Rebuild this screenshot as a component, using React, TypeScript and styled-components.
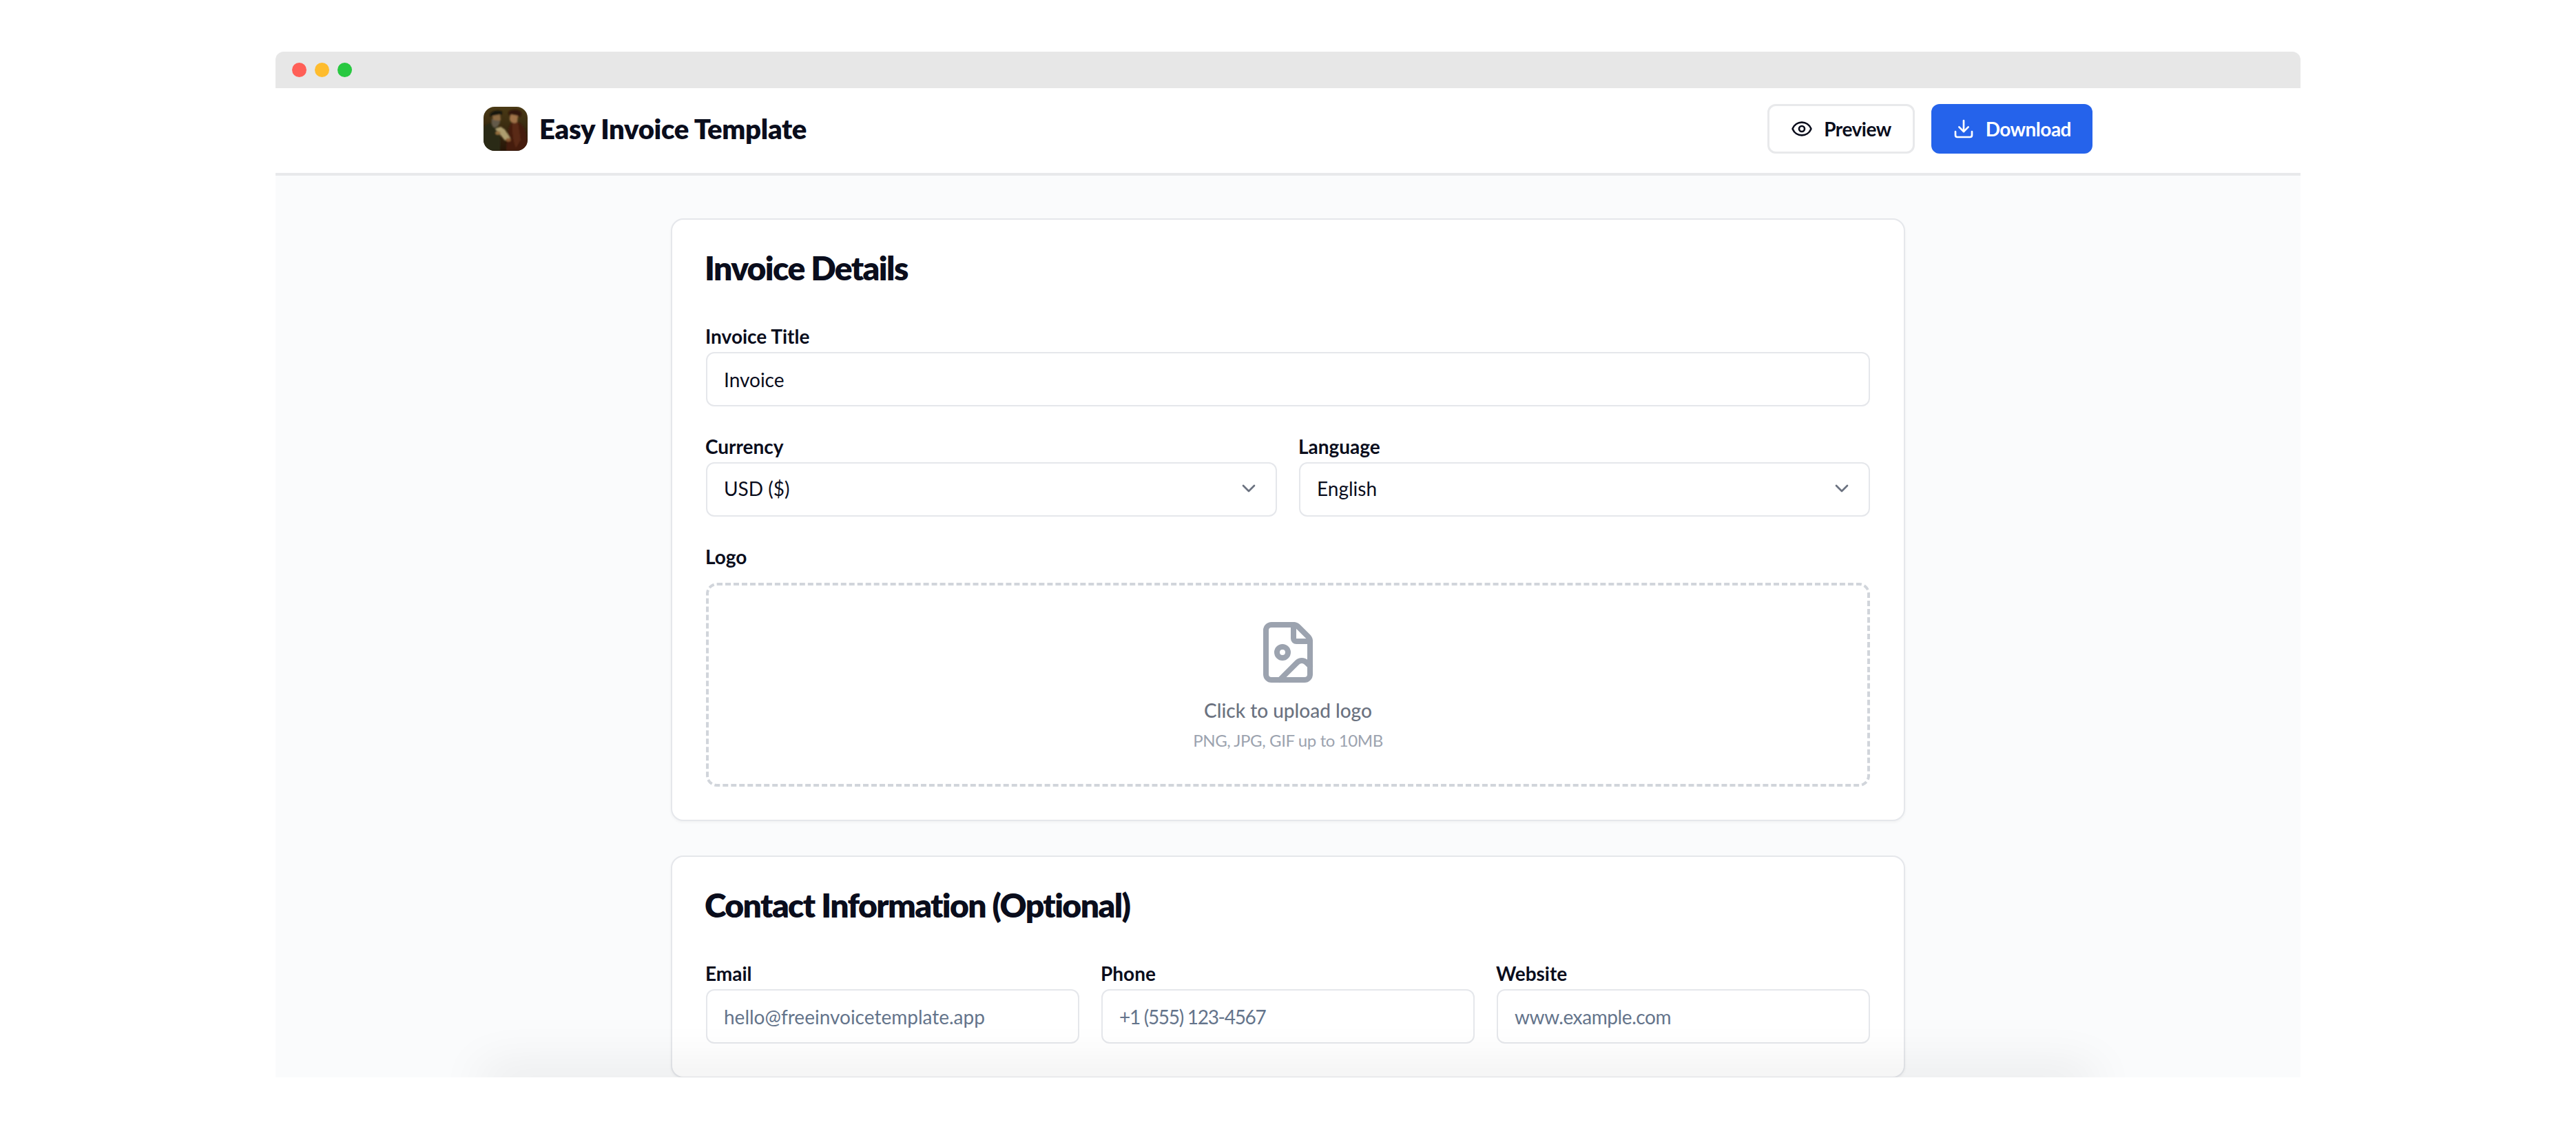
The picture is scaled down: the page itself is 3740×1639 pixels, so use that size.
import React from 'react';
import styled, { createGlobalStyle } from 'styled-components';
import { ChevronDown, Download, Eye, FileImage } from 'lucide-react';

const GlobalStyle = createGlobalStyle`
  html, body {
    margin: 0;
    padding: 0;
    background: #ffffff;
  }
  * {
    box-sizing: border-box;
  }
`;

const Page = styled.div`
  width: 3740px;
  height: 1639px;
  padding-top: 75px;
  display: flex;
  justify-content: center;
  background: #ffffff;
  font-family: 'Lato', 'Noto Sans', sans-serif;
  color: #0a0d1c;
  overflow: hidden;
`;

const Window = styled.div`
  position: relative;
  width: 2940px;
  height: 1489px;
  display: flex;
  flex-direction: column;
  border-radius: 12px 12px 0 0;
  background: #fafbfc;
  overflow: hidden;
`;

const TitleBar = styled.div`
  flex: none;
  height: 53px;
  padding-left: 24px;
  display: flex;
  align-items: center;
  gap: 12px;
  background: #e7e7e7;
`;

const Light = styled.span<{ $color: string }>`
  width: 21px;
  height: 21px;
  border-radius: 50%;
  background: ${(p) => p.$color};
`;

const Header = styled.header`
  flex: none;
  padding: 23px 302px 28px;
  display: flex;
  align-items: center;
  justify-content: space-between;
  background: #ffffff;
  border-bottom: 4px solid #e8e9eb;
`;

const Brand = styled.div`
  display: flex;
  align-items: center;
  gap: 17px;
`;

const BrandName = styled.span`
  font-size: 40px;
  line-height: 56px;
  font-weight: 800;
  letter-spacing: -0.3px;
`;

const Actions = styled.div`
  display: flex;
  gap: 24px;
`;

const Button = styled.button<{ $primary?: boolean }>`
  height: 72px;
  padding: 0 31px;
  display: flex;
  align-items: center;
  gap: 16px;
  border-radius: 12px;
  border: ${(p) => (p.$primary ? 'none' : '3px solid #e8e9eb')};
  background: ${(p) => (p.$primary ? '#2563eb' : '#ffffff')};
  color: ${(p) => (p.$primary ? '#ffffff' : '#0a0d1c')};
  font-family: inherit;
  font-size: 28px;
  font-weight: 700;
  letter-spacing: -0.5px;
`;

const Main = styled.main`
  padding-top: 62px;
  display: flex;
  flex-direction: column;
  align-items: center;
  gap: 50px;
`;

const Card = styled.section`
  width: 1792px;
  padding: 34px 49px 48px;
  background: #ffffff;
  border: 2px solid #e5e7eb;
  border-radius: 18px;
  box-shadow: 0 2px 4px rgba(0, 0, 0, 0.04);
`;

const CardTitle = styled.h2`
  margin: 0 0 47px -2px;
  font-size: 48px;
  line-height: 72px;
  font-weight: 800;
  letter-spacing: -1.6px;
`;

const Row = styled.div<{ $cols?: number }>`
  display: grid;
  grid-template-columns: repeat(${(p) => p.$cols ?? 1}, 1fr);
  gap: 32px;
  margin-bottom: 42px;

  &:last-child {
    margin-bottom: 0;
  }
`;

const Label = styled.label<{ $gap?: number }>`
  display: block;
  margin: 0 0 ${(p) => p.$gap ?? 7}px -1px;
  font-size: 28px;
  line-height: 32px;
  font-weight: 700;
`;

const fieldStyles = `
  width: 100%;
  height: 79px;
  padding: 0 24px;
  background: #ffffff;
  border: 2px solid #e5e7eb;
  border-radius: 12px;
  font-family: inherit;
  font-size: 28px;
  color: #0a0d1c;
  outline: none;
`;

const Input = styled.input<{ $tracking?: number }>`
  ${fieldStyles}
  display: block;
  letter-spacing: ${(p) => p.$tracking ?? 0}px;

  &::placeholder {
    color: #64748b;
    opacity: 1;
  }
`;

const Select = styled.button`
  ${fieldStyles}
  padding-right: 23px;
  padding-bottom: 3px;
  display: flex;
  align-items: center;
  justify-content: space-between;
  text-align: left;

  svg {
    color: #6b7280;
  }
`;

const Upload = styled.div`
  height: 296px;
  padding-top: 49px;
  display: flex;
  flex-direction: column;
  align-items: center;
  border: 4px dashed #d1d5db;
  border-radius: 16px;

  svg {
    color: #9ca3af;
  }
`;

const UploadTitle = styled.div`
  margin-top: 16px;
  font-size: 28px;
  line-height: 40px;
  font-weight: 500;
  color: #6b7280;
`;

const UploadHint = styled.div`
  margin-top: 8px;
  font-size: 24px;
  line-height: 32px;
  letter-spacing: -0.4px;
  color: #9ca3af;
`;

const BottomGlow = styled.div`
  position: absolute;
  top: 100%;
  left: 50%;
  width: 2340px;
  height: 30px;
  transform: translateX(-50%);
  box-shadow: 0 -8px 70px rgba(0, 0, 0, 0.12);
  pointer-events: none;
`;

const BrandArt = () => (
  <svg width="64" height="64" viewBox="0 0 64 64" aria-hidden="true">
    <defs>
      <clipPath id="artClip">
        <rect width="64" height="64" rx="16" />
      </clipPath>
      <linearGradient id="artBg" x1="0" y1="0" x2="0" y2="1">
        <stop offset="0" stopColor="#4a3a15" />
        <stop offset="0.55" stopColor="#36270f" />
        <stop offset="1" stopColor="#261507" />
      </linearGradient>
      <filter id="artSoft" x="-10%" y="-10%" width="120%" height="120%">
        <feGaussianBlur stdDeviation="0.9" />
      </filter>
    </defs>
    <g clipPath="url(#artClip)">
      <rect width="64" height="64" fill="url(#artBg)" />
      <g filter="url(#artSoft)">
        {/* left figure */}
        <path d="M-2 64 L-2 34 C2 24 12 22 19 25 C24 30 25 46 24 64 Z" fill="#2a2b18" />
        <path d="M9 13 C9 7 20 3 27 7 C28 10 26 13 22 13 C18 13 13 15 9 13 Z" fill="#17140c" />
        <path d="M13 13 L24 11 L25 19 L22 23 L14 22 Z" fill="#8c6a42" />
        <path d="M12 17 C14 20 20 20 24 20 C24 26 20 31 15 30 C12 28 11 22 12 17 Z" fill="#635a48" />
        {/* right figure */}
        <path d="M33 64 C34 44 35 28 42 22 C50 20 60 26 62 40 L66 64 Z" fill="#451d0e" />
        <path d="M42 24 L50 22 L54 48 L47 60 C43 50 41 36 42 24 Z" fill="#5a2a14" />
        <path d="M36 8 C40 3 52 3 55 9 C55 13 53 16 50 14 C46 11 41 13 37 13 Z" fill="#331208" />
        <path d="M40 11 L50 13 L49 22 C46 25 42 24 39 21 C37 18 38 14 40 11 Z" fill="#a0724a" />
        {/* scroll and hands */}
        <path d="M17 32 L25 29 L31 33 L39 46 L31 49 L24 40 Z" fill="#ae9e70" />
        <ellipse cx="21" cy="38" rx="3.6" ry="2.6" fill="#95703f" />
        <ellipse cx="36" cy="48" rx="3.6" ry="2.6" fill="#8c5a32" />
      </g>
    </g>
  </svg>
);

const App: React.FC = () => {
  return (
    <Page>
      <GlobalStyle />
      <Window>
        <TitleBar>
          <Light $color="#ff5f57" />
          <Light $color="#febc2e" />
          <Light $color="#28c840" />
        </TitleBar>
        <Header>
          <Brand>
            <BrandArt />
            <BrandName>Easy Invoice Template</BrandName>
          </Brand>
          <Actions>
            <Button>
              <Eye size={32} strokeWidth={2} />
              Preview
            </Button>
            <Button $primary>
              <Download size={32} strokeWidth={2} />
              Download
            </Button>
          </Actions>
        </Header>
        <Main>
          <Card>
            <CardTitle>Invoice Details</CardTitle>
            <Row>
              <div>
                <Label>Invoice Title</Label>
                <Input defaultValue="Invoice" />
              </div>
            </Row>
            <Row $cols={2}>
              <div>
                <Label>Currency</Label>
                <Select type="button">
                  USD ($)
                  <ChevronDown size={32} strokeWidth={2} />
                </Select>
              </div>
              <div>
                <Label>Language</Label>
                <Select type="button">
                  English
                  <ChevronDown size={32} strokeWidth={2} />
                </Select>
              </div>
            </Row>
            <Row>
              <div>
                <Label $gap={22}>Logo</Label>
                <Upload>
                  <FileImage size={96} strokeWidth={2} />
                  <UploadTitle>Click to upload logo</UploadTitle>
                  <UploadHint>PNG, JPG, GIF up to 10MB</UploadHint>
                </Upload>
              </div>
            </Row>
          </Card>
          <Card>
            <CardTitle>Contact Information (Optional)</CardTitle>
            <Row $cols={3}>
              <div>
                <Label>Email</Label>
                <Input placeholder="hello@freeinvoicetemplate.app" />
              </div>
              <div>
                <Label>Phone</Label>
                <Input $tracking={-1.3} placeholder="+1 (555) 123-4567" />
              </div>
              <div>
                <Label>Website</Label>
                <Input $tracking={-0.4} placeholder="www.example.com" />
              </div>
            </Row>
          </Card>
        </Main>
        <BottomGlow />
      </Window>
    </Page>
  );
};

export default App;
